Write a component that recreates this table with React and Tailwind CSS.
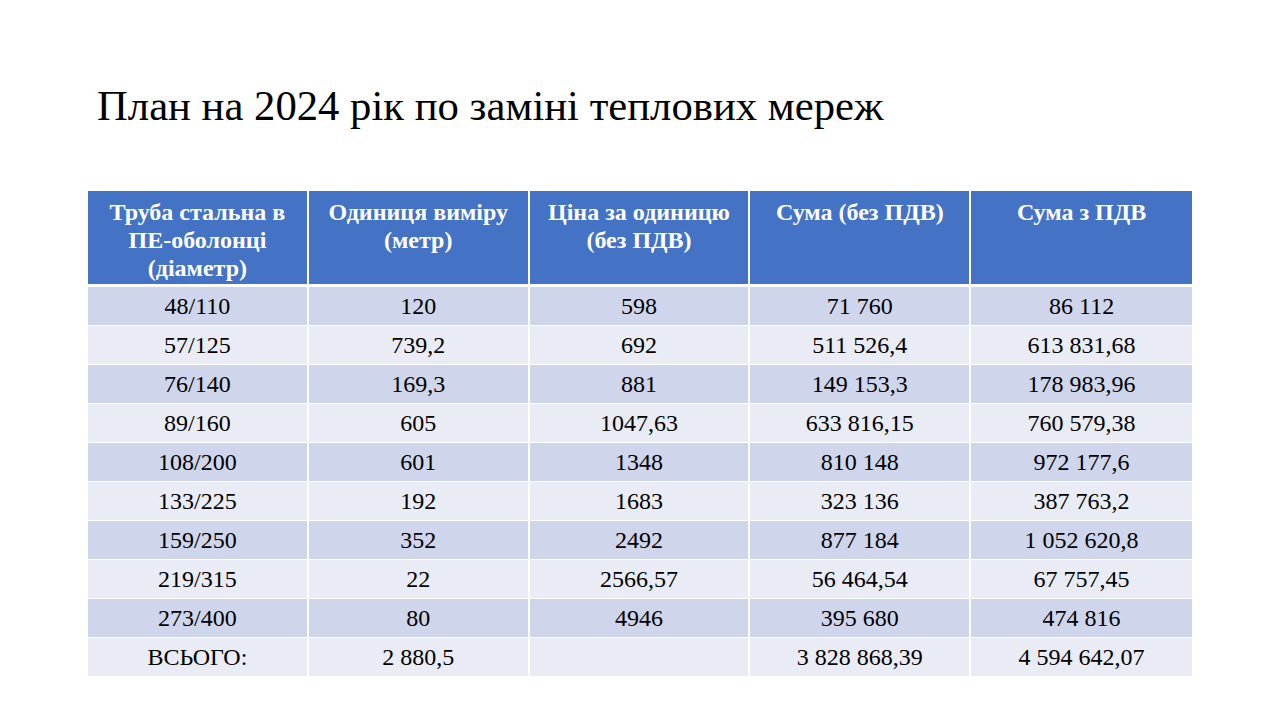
import React from "react";

const headers = [
  ["Труба стальна в", "ПЕ-оболонці", "(діаметр)"],
  ["Одиниця виміру", "(метр)"],
  ["Ціна за одиницю", "(без ПДВ)"],
  ["Сума (без ПДВ)"],
  ["Сума з ПДВ"],
];

const rows = [
  ["48/110", "120", "598", "71 760", "86 112"],
  ["57/125", "739,2", "692", "511 526,4", "613 831,68"],
  ["76/140", "169,3", "881", "149 153,3", "178 983,96"],
  ["89/160", "605", "1047,63", "633 816,15", "760 579,38"],
  ["108/200", "601", "1348", "810 148", "972 177,6"],
  ["133/225", "192", "1683", "323 136", "387 763,2"],
  ["159/250", "352", "2492", "877 184", "1 052 620,8"],
  ["219/315", "22", "2566,57", "56 464,54", "67 757,45"],
  ["273/400", "80", "4946", "395 680", "474 816"],
  ["ВСЬОГО:", "2 880,5", "", "3 828 868,39", "4 594 642,07"],
];

export default function App() {
  return (
    <div className="w-[1280px] h-[720px] bg-white font-['Liberation_Serif',serif] text-black overflow-hidden">
      <h1 className="pl-[97px] pt-[84px] text-[42.7px] leading-[43px]">
        План на 2024 рік по заміні теплових мереж
      </h1>

      <div className="ml-[88px] mt-[64px] w-[1104px]">
        <div className="grid grid-cols-5 h-[96px] bg-[#4472C4] divide-x-2 divide-white border-b-[3px] border-white">
          {headers.map((h, i) => (
            <div key={i} className="pt-[7px] text-center text-white font-bold text-[24px] leading-[28px]">
              {h.map((line, j) => (
                <div key={j}>{line}</div>
              ))}
            </div>
          ))}
        </div>
        {rows.map((r, i) => (
          <div
            key={i}
            className={`grid grid-cols-5 h-[39px] divide-x-2 divide-white border-b border-white ${
              i % 2 === 0 ? "bg-[#CFD5EA]" : "bg-[#E9EBF5]"
            }`}
          >
            {r.map((c, j) => (
              <div key={j} className="flex items-center justify-center text-[24px]">
                {c}
              </div>
            ))}
          </div>
        ))}
      </div>
    </div>
  );
}
